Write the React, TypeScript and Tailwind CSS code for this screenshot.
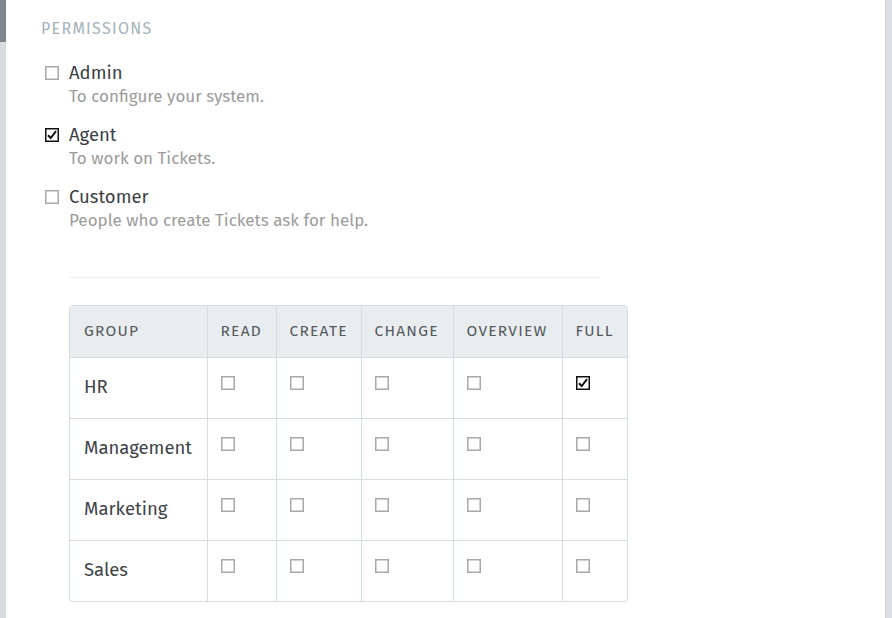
import React from 'react';

const font = { fontFamily: '"Fira Sans", "Open Sans", "Noto Sans", sans-serif' };

const Box = ({ checked = false }: { checked?: boolean }) =>
  checked ? (
    <svg width="14" height="14" viewBox="0 0 14 14" className="block">
      <rect x="0.75" y="0.75" width="12.5" height="12.5" fill="white" stroke="#111" strokeWidth="1.5" />
      <path d="M3 7.2 L5.7 10 L11 3.2" fill="none" stroke="#111" strokeWidth="2" />
    </svg>
  ) : (
    <svg width="14" height="14" viewBox="0 0 14 14" className="block">
      <rect x="0.75" y="0.75" width="12.5" height="12.5" fill="white" stroke="#a9a9a9" strokeWidth="1.5" />
    </svg>
  );

const roles = [
  { name: 'Admin', desc: 'To configure your system.', checked: false },
  { name: 'Agent', desc: 'To work on Tickets.', checked: true },
  { name: 'Customer', desc: 'People who create Tickets ask for help.', checked: false },
];

const cols = [
  { label: 'GROUP', w: 'w-[137px]' },
  { label: 'READ', w: 'w-[69px]' },
  { label: 'CREATE', w: 'w-[85px]' },
  { label: 'CHANGE', w: 'w-[92px]' },
  { label: 'OVERVIEW', w: 'w-[109px]' },
  { label: 'FULL', w: 'w-[65px]' },
];

const groups = [
  { name: 'HR', full: true },
  { name: 'Management', full: false },
  { name: 'Marketing', full: false },
  { name: 'Sales', full: false },
];

export default function App() {
  return (
    <div className="flex h-[618px] w-[892px] overflow-hidden bg-white" style={font}>
      <div className="flex w-[6px] flex-col bg-[#d9dce1]">
        <div className="h-[42px] bg-[#80868e]" />
      </div>

      <div className="flex-1 pl-[35px] pt-[19px]">
        <div className="text-[16px] leading-5 tracking-[0.08em] text-[#a6b3bc]">PERMISSIONS</div>

        <div className="mt-[22px] flex flex-col gap-[14px] pl-[4px]">
          {roles.map((r) => (
            <div key={r.name} className="flex gap-[10px]">
              <div className="pt-[5px]">
                <Box checked={r.checked} />
              </div>
              <div>
                <div className="text-[18.5px] leading-6 text-[#3a3f44]">{r.name}</div>
                <div className="text-[17px] leading-6 text-[#9b9b9b]">{r.desc}</div>
              </div>
            </div>
          ))}
        </div>

        <div className="ml-[28px] mt-[44px] h-px w-[530px] bg-[#eceef0]" />

        <div className="ml-[28px] mt-[27px] w-[559px] overflow-hidden rounded-[4px] border border-[#d4dde2]">
          <table className="w-full table-fixed border-collapse">
            <thead>
              <tr className="h-[51px] bg-[#e9edf0]">
                {cols.map((c, i) => (
                  <th
                    key={c.label}
                    className={`${c.w} ${i > 0 ? 'border-l border-[#d4dde2] pl-[13px]' : 'pl-[14px]'} pr-0 text-left text-[15.5px] font-normal tracking-[0.08em] text-[#55595d]`}
                  >
                    {c.label}
                  </th>
                ))}
              </tr>
            </thead>
            <tbody>
              {groups.map((g) => (
                <tr key={g.name} className="h-[61px] border-t border-[#d4dde2]">
                  <td className="px-[14px] text-[18.5px] text-[#3e4348]">{g.name}</td>
                  {[0, 1, 2, 3, 4].map((k) => (
                    <td key={k} className="border-l border-[#d4dde2] pl-[13px] pb-[10px]">
                      <Box checked={g.full && k === 4} />
                    </td>
                  ))}
                </tr>
              ))}
            </tbody>
          </table>
        </div>
      </div>

      <div className="w-[7px] border-l border-[#cfd3d8] bg-[#dcdfe3]" />
    </div>
  );
}
